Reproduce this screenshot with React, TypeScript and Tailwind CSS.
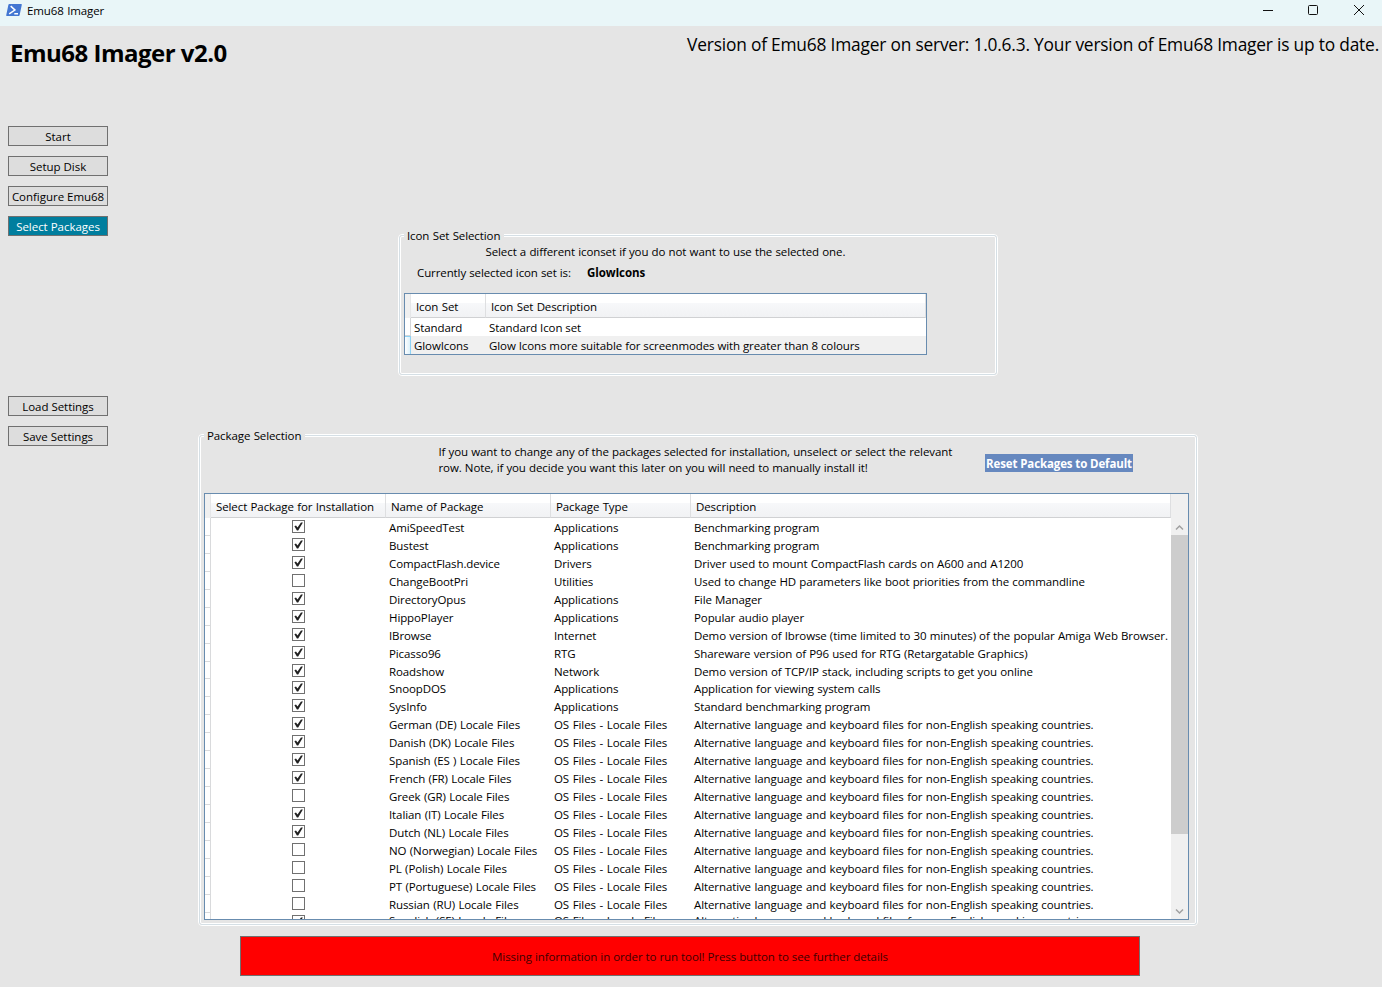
import React from "react";

type Pkg = [boolean, string, string, string];

const LOCALE = "Alternative language and keyboard files for non-English speaking countries.";
const OS = "OS Files - Locale Files";

const PACKAGES: Pkg[] = [
  [true, "AmiSpeedTest", "Applications", "Benchmarking program"],
  [true, "Bustest", "Applications", "Benchmarking program"],
  [true, "CompactFlash.device", "Drivers", "Driver used to mount CompactFlash cards on A600 and A1200"],
  [false, "ChangeBootPri", "Utilities", "Used to change HD parameters like boot priorities from the commandline"],
  [true, "DirectoryOpus", "Applications", "File Manager"],
  [true, "HippoPlayer", "Applications", "Popular audio player"],
  [true, "IBrowse", "Internet", "Demo version of Ibrowse (time limited to 30 minutes) of the popular Amiga Web Browser."],
  [true, "Picasso96", "RTG", "Shareware version of P96 used for RTG (Retargatable Graphics)"],
  [true, "Roadshow", "Network", "Demo version of TCP/IP stack, including scripts to get you online"],
  [true, "SnoopDOS", "Applications", "Application for viewing system calls"],
  [true, "SysInfo", "Applications", "Standard benchmarking program"],
  [true, "German (DE) Locale Files", OS, LOCALE],
  [true, "Danish (DK) Locale Files", OS, LOCALE],
  [true, "Spanish (ES ) Locale Files", OS, LOCALE],
  [true, "French (FR) Locale Files", OS, LOCALE],
  [false, "Greek (GR) Locale Files", OS, LOCALE],
  [true, "Italian (IT) Locale Files", OS, LOCALE],
  [true, "Dutch (NL) Locale Files", OS, LOCALE],
  [false, "NO (Norwegian) Locale Files", OS, LOCALE],
  [false, "PL (Polish) Locale Files", OS, LOCALE],
  [false, "PT (Portuguese) Locale Files", OS, LOCALE],
  [false, "Russian (RU) Locale Files", OS, LOCALE],
  [true, "Swedish (SE) Locale Files", OS, LOCALE],
];

function NavButton({ label, active = false }: { label: string; active?: boolean }) {
  return (
    <button
      className={`flex h-5 w-[100px] shrink-0 items-center justify-center border border-[#707070] pt-px tracking-[-0.03px] whitespace-nowrap ${
        active ? "bg-[#007e9e] text-white" : "bg-[#dddddd] text-black"
      }`}
    >
      {label}
    </button>
  );
}

function GroupBox({ title, className, children }: { title: string; className: string; children: React.ReactNode }) {
  return (
    <section className={`flex shrink-0 rounded-[4px] border border-white ${className}`}>
      <div className="flex min-w-0 flex-1 rounded-[3px] border border-[#d5dfe5]">
        <div className="flex min-w-0 flex-1 flex-col rounded-[2px] border border-white">
          <h2 className="z-10 -mt-[9px] ml-[3px] h-4 self-start bg-[#e5e5e5] pr-1 pl-[3px] leading-4">{title}</h2>
          {children}
        </div>
      </div>
    </section>
  );
}

function HeaderCell({ label, className }: { label: string; className: string }) {
  return (
    <div
      className={`flex h-[24px] shrink-0 items-center border-r border-b border-r-[#dedfe1] border-b-[#d0d1d3] bg-linear-to-b from-white from-40% via-[#f7f8fa] via-40% to-[#f1f2f4] pt-[3px] pl-[5px] whitespace-nowrap ${className}`}
    >
      {label}
    </div>
  );
}

function Check({ on }: { on: boolean }) {
  return (
    <span className="flex size-[13px] shrink-0 border border-[#707070] bg-white">
      {on && (
        <svg viewBox="0 0 11 11" className="size-[11px]" fill="#212121">
          <path d="M1.4 5.2 L3 4.4 L4.5 6.6 L8 1.4 L9.9 1.4 L5.2 9.4 L3.9 9.4 Z" />
        </svg>
      )}
    </span>
  );
}

function Chevron({ d }: { d: string }) {
  return (
    <svg viewBox="0 0 17 17" className="size-[17px] shrink-0" fill="none" stroke="#a0a0a0" strokeWidth="1.5">
      <path d={d} />
    </svg>
  );
}

export default function App() {
  return (
    <div className="flex h-[987px] w-[1382px] flex-col overflow-hidden bg-[#e5e5e5] font-['Open_Sans','Liberation_Sans',sans-serif] text-[11.5px] leading-4 tracking-[-0.1px] text-black [word-spacing:0.5px]">
      <header className="flex h-[26px] shrink-0 items-start bg-[#e9f6f8]">
        <svg viewBox="0 0 16 12" className="mt-1 ml-[6px] h-3 w-4">
          <path d="M3.4 0H15.2Q16 0 15.8 .8L13.6 11.2Q13.4 12 12.6 12H.8Q0 12 .2 11.2L2.4 .8Q2.6 0 3.4 0Z" fill="#4377d2" />
          <path d="M4.7 2.1L8.9 6L3.2 9.9M8.3 9.8H12" fill="none" stroke="#fff" strokeWidth="1.5" />
        </svg>
        <span className="mt-[3px] ml-[5px]">Emu68 Imager</span>
        <svg viewBox="0 0 120 20" className="ml-auto h-5 w-[120px]" fill="none" stroke="#111" strokeWidth="1">
          <path d="M1 10.5H11" />
          <rect x="46.5" y="5.5" width="9" height="9" rx="1" />
          <path d="M92 5L102 15M102 5L92 15" />
        </svg>
      </header>

      <div className="flex h-[100px] shrink-0 items-start justify-between">
        <h1 className="mt-[9px] ml-[10px] text-[24px] leading-9 font-bold tracking-[-0.5px] [word-spacing:0px]">Emu68 Imager v2.0</h1>
        <p className="mt-[6px] mr-[3px] text-[17.35px] leading-6 tracking-[-0.2px] whitespace-nowrap [word-spacing:0px]">
          Version of Emu68 Imager on server: 1.0.6.3. Your version of Emu68 Imager is up to date.
        </p>
      </div>

      <div className="flex min-h-0 flex-1">
        <nav className="ml-2 flex w-[100px] shrink-0 flex-col gap-[10px]">
          <NavButton label="Start" />
          <NavButton label="Setup Disk" />
          <NavButton label="Configure Emu68" />
          <NavButton label="Select Packages" active />
          <div className="h-[140px] shrink-0" />
          <NavButton label="Load Settings" />
          <NavButton label="Save Settings" />
        </nav>

        <main className="ml-[90px] flex w-[1000px] shrink-0 flex-col pt-[108px]">
          <GroupBox title="Icon Set Selection" className="ml-[200px] h-[142px] w-[600px]">
            <p className="ml-[84.5px] whitespace-nowrap [word-spacing:0.35px]">
              Select a different iconset if you do not want to use the selected one.
            </p>
            <div className="mt-[5px] ml-4 flex">
              <span className="w-[170px] [word-spacing:0.2px]">Currently selected icon set is:</span>
              <b className="tracking-[-0.1px]">GlowIcons</b>
            </div>
            <div className="mt-[12px] ml-[3px] flex h-[62px] w-[523px] flex-col border border-[#688caf] bg-white">
              <div className="flex">
                <div className="h-6 w-[6px] border-r border-[#e5e6e8] bg-[#f0f0f0]" />
                <HeaderCell label="Icon Set" className="w-[75px]" />
                <HeaderCell label="Icon Set Description" className="flex-1" />
              </div>
              <div className="flex h-[18px] items-center">
                <div className="h-full w-[6px] border-r border-b border-[#d5d6d8]" />
                <span className="w-[75px] pt-[2px] pl-[3px]">Standard</span>
                <span className="pt-[2px] pl-[3px] [word-spacing:0px]">Standard Icon set</span>
              </div>
              <div className="flex h-[18px] items-center bg-[#f0f0f0]">
                <div className="h-full w-[6px] border-t border-r border-[#8fd3f5] bg-linear-to-r from-white to-[#dcf1fb]" />
                <span className="w-[75px] pt-[2px] pl-[3px]">GlowIcons</span>
                <span className="pt-[2px] pl-[3px] [word-spacing:0.1px]">
                  Glow Icons more suitable for screenmodes with greater than 8 colours
                </span>
              </div>
            </div>
          </GroupBox>

          <GroupBox title="Package Selection" className="mt-[58px] h-[492px] w-[1000px]">
            <div className="flex h-[49px] shrink-0 items-start">
              <p className="ml-[237.5px] w-[546.5px] whitespace-nowrap [word-spacing:0.3px]">
                If you want to change any of the packages selected for installation, unselect or select the relevant
                <br />
                row. Note, if you decide you want this later on you will need to manually install it!
              </p>
              <button className="mt-[10px] flex h-[18px] w-[148px] items-center justify-center bg-[#6688bf] pt-[2px] font-bold tracking-[-0.12px] whitespace-nowrap text-white">
                Reset Packages to Default
              </button>
            </div>
            <div className="ml-[3px] flex h-[427px] w-[985px] shrink-0 border border-[#688caf] bg-white">
              <div className="flex min-w-0 flex-1 flex-col overflow-hidden">
                <div className="flex shrink-0">
                  <div className="h-6 w-[6px] border-r border-[#e5e6e8] bg-[#f0f0f0]" />
                  <HeaderCell label="Select Package for Installation" className="w-[175px]" />
                  <HeaderCell label="Name of Package" className="w-[165px]" />
                  <HeaderCell label="Package Type" className="w-[140px]" />
                  <HeaderCell label="Description" className="w-[480px]" />
                </div>
                {PACKAGES.map(([on, name, type, description]) => (
                  <div key={name} className="flex h-[17.953px] shrink-0 whitespace-nowrap last:leading-[12px]">
                    <div className="w-[6px] shrink-0 border-r border-b border-[#d9dadc]" />
                    <div className="flex w-[175px] shrink-0 justify-center pt-[2px]">
                      <Check on={on} />
                    </div>
                    <span className="w-[165px] shrink-0 pt-[2px] pl-[3px]">{name}</span>
                    <span className="w-[140px] shrink-0 pt-[2px] pl-[3px] [word-spacing:0.75px]">{type}</span>
                    <span
                      className={`pt-[2px] pl-[3px] ${description === LOCALE ? "[word-spacing:0.6px]" : "[word-spacing:0.3px]"}`}
                    >
                      {description}
                    </span>
                  </div>
                ))}
              </div>
              <div className="flex w-[17px] shrink-0 flex-col bg-[#f0f0f0] pt-6">
                <Chevron d="M5 11.5L8.5 8L12 11.5" />
                <div className="h-[299px] shrink-0 bg-[#cdcdcd]" />
                <div className="flex-1" />
                <Chevron d="M5 7.5L8.5 11L12 7.5" />
              </div>
            </div>
          </GroupBox>

          <button className="mt-[10px] ml-[42px] flex h-10 w-[900px] shrink-0 items-center justify-center border border-[#707070] bg-[#ff0000] pt-px text-[#400000] [word-spacing:0.2px]">
            Missing information in order to run tool! Press button to see further details
          </button>
        </main>
      </div>
    </div>
  );
}
